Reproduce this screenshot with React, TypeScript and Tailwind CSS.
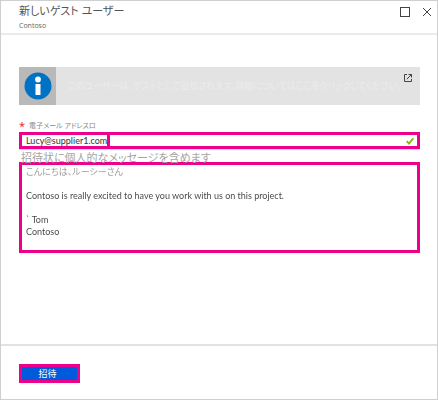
import { useState } from "react";

const initialMessage =
  "こんにちは、ルーシーさん\n\nContoso is really excited to have you work with us on this project.\n\n` Tom\nContoso";

function InfoBanner() {
  return (
    <section className="mt-8 flex h-[38px] bg-[#e3e3e3]">
      <div className="flex w-[37px] shrink-0 items-center justify-center bg-[#b9b9b9]">
        <svg viewBox="0 0 28 28" className="size-7" aria-hidden="true">
          <circle cx="14" cy="14" r="13.5" fill="#0072c6" />
          <circle cx="14" cy="7.5" r="2.9" fill="#fff" />
          <rect x="11.5" y="12" width="5" height="11" fill="#fff" />
        </svg>
      </div>
      <p className="min-w-0 grow self-center overflow-hidden pl-3 text-[9px] leading-3 whitespace-nowrap text-[#ececec]">
        このユーザーは、ゲストとして追加されます。詳細についてはここをクリックしてください。
      </p>
      <a href="#details" aria-label="詳細" className="-ml-4 mt-[6px] mr-[7px] size-[10px] shrink-0 text-[#444]">
        <svg viewBox="0 0 10 10" className="size-[10px]" fill="none" stroke="currentColor" aria-hidden="true">
          <path d="M4 1.5H1.5V8.5H8.5V6M5.5 1.5H8.5V4.5M8.5 1.5L3.8 6.2" />
        </svg>
      </a>
    </section>
  );
}

export default function App() {
  const [email, setEmail] = useState("Lucy@supplier1.com");
  const [message, setMessage] = useState(initialMessage);

  return (
    <main className="flex min-h-screen flex-col border border-[#cfcfcf] bg-white font-['Open_Sans','Noto_Sans_CJK_JP',sans-serif] [font-feature-settings:'palt']">
      <header className="flex h-[34px] items-start justify-between border-b-2 border-[#ebebeb] pr-[5px] pl-[18px]">
        <div className="pt-[2px]">
          <h1 className="text-[11px] leading-4 text-[#555]">新しいゲスト ユーザー</h1>
          <p className="text-[7px] leading-[14px] text-[#666]">Contoso</p>
        </div>
        <div className="flex gap-3 pt-[6px] text-[#444]">
          <button type="button" aria-label="最大化" className="size-[10px]">
            <svg viewBox="0 0 10 10" className="size-[10px]" fill="none" stroke="currentColor" aria-hidden="true">
              <rect x="0.5" y="0.5" width="9" height="9" />
            </svg>
          </button>
          <button type="button" aria-label="閉じる" className="size-[10px]">
            <svg viewBox="0 0 10 10" className="size-[10px]" fill="none" stroke="currentColor" aria-hidden="true">
              <path d="M1 1L9 9M9 1L1 9" />
            </svg>
          </button>
        </div>
      </header>

      <form className="flex grow flex-col" onSubmit={(e) => e.preventDefault()}>
        <div className="grow pr-[17px] pl-[18px]">
          <InfoBanner />
          <label htmlFor="email" className="mt-[15px] flex h-3 items-center gap-1 text-[7px] leading-3 text-[#8a8a8a]">
            <span className="text-[11px] text-[#e81123]">*</span>
            電子メール アドレスロ
          </label>
          <div className="flex h-[18px] items-center border-b border-[#d8d8d8]">
            <div className="flex h-[17px] grow items-center border-3 border-[#ec008c] pr-[3px] pl-1">
              <input
                id="email"
                type="email"
                value={email}
                onChange={(e) => setEmail(e.target.value)}
                className="h-[11px] w-[84px] border-r-3 border-[#ec008c] font-['Lato',sans-serif] text-[9px] leading-[11px] text-[#333] outline-none"
              />
              <svg viewBox="0 0 8 8" className="ml-auto size-2" fill="none" stroke="#7fba00" strokeWidth="1.8" aria-hidden="true">
                <path d="M0.7 4.2L3 6.6L7.3 1.2" />
              </svg>
            </div>
          </div>
          <label htmlFor="message" className="block h-3 pl-[2px] text-[11px] leading-4 text-[#a5a5a5]">
            招待状に個人的なメッセージを含めます
          </label>
          <div className="border-3 border-[#ec008c] pt-px pb-[11px] pl-1">
            <textarea
              id="message"
              rows={6}
              value={message}
              onChange={(e) => setMessage(e.target.value)}
              className="block h-[73px] w-full resize-none overflow-hidden bg-linear-[to_bottom,#999_12px,#444_12px] bg-clip-text font-['Lato','Noto_Sans_CJK_JP',sans-serif] text-[9px] leading-[12px] text-transparent caret-[#333] outline-none"
            />
          </div>
        </div>

        <footer className="h-[55px] border-t-2 border-[#e2e2e2] pt-[18px] pl-[18px]">
          <button
            type="submit"
            className="flex h-[19px] w-[61px] items-center justify-center border-3 border-[#ec008c] bg-[#005bdc] pr-1 text-[9px] leading-3 text-white"
          >
            招待
          </button>
        </footer>
      </form>
    </main>
  );
}
